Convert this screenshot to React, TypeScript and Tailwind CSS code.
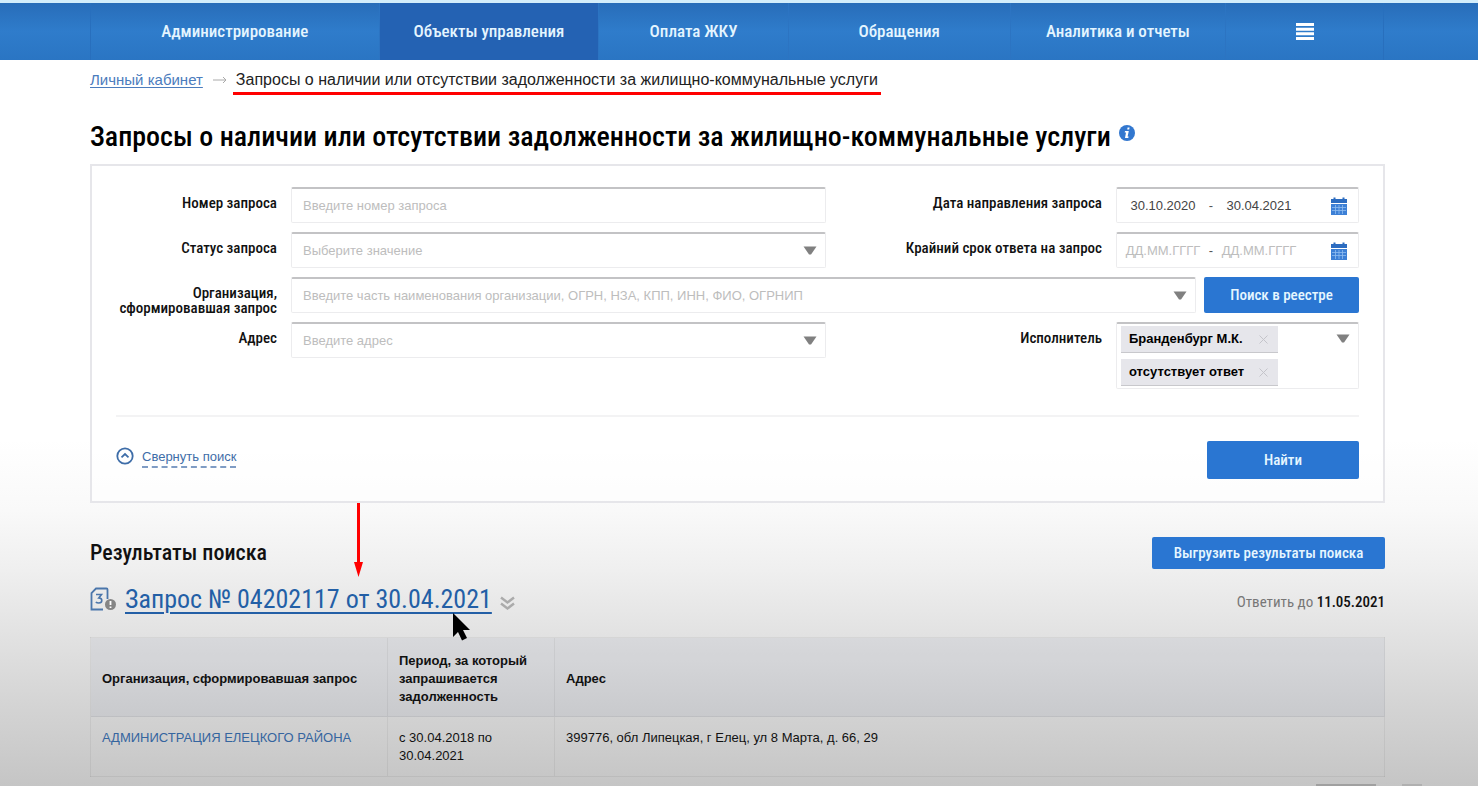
import { ReactNode } from "react";

const tabs = [
  { name: "Администрирование", active: false },
  { name: "Объекты управления", active: true },
  { name: "Оплата ЖКУ", active: false },
  { name: "Обращения", active: false },
  { name: "Аналитика и отчеты", active: false },
];

const executors = ["Бранденбург М.К.", "отсутствует ответ"];

const results = [
  {
    org: "АДМИНИСТРАЦИЯ ЕЛЕЦКОГО РАЙОНА",
    period: "с 30.04.2018 по 30.04.2021",
    address: "399776, обл Липецкая, г Елец, ул 8 Марта, д. 66, 29",
  },
];

const condensed =
  "font-['Roboto_Condensed','Liberation_Sans_Narrow',Roboto,sans-serif]";
const field =
  "h-9 w-full rounded-xs border border-[#ececee] border-t-2 border-t-[#c3c3c5] bg-white";
const text = "text-[13px] text-[#444] placeholder:text-[#bdbdbd] outline-none";
const blueButton = "rounded-xs bg-[#2a76d2] font-medium text-[#e6f6ff]";

const Triangle = () => (
  <svg width="14" height="9" viewBox="0 0 14 9" fill="#808080" aria-hidden="true">
    <path d="M0.5 0.5h13L8 8.5H6z" />
  </svg>
);

const CalendarIcon = () => (
  <svg width="18" height="18" viewBox="0 0 18 18" aria-hidden="true">
    <path d="M1 2h2.5V0.5h2V2h7V0.5h2V2H17v4H1z" fill="#2c6cc0" />
    <path d="M1 7h16v11H1z" fill="#3d80d6" />
    <path
      d="M2 10.5h14M2 13.5h14M5.5 8v9M9 8v9M12.5 8v9"
      stroke="#8fbcf0"
      strokeWidth="0.8"
    />
  </svg>
);

const Label = ({ id, children }: { id: string; children: ReactNode }) => (
  <label
    htmlFor={id}
    className={`${condensed} -mb-1.5 pt-[9px] text-right text-[15px] leading-[15px] font-medium text-[#111]`}
  >
    {children}
  </label>
);

const Combo = ({ id, placeholder }: { id: string; placeholder: string }) => (
  <div className={`${field} flex items-center pr-2 pl-[11px]`}>
    <input
      id={id}
      placeholder={placeholder}
      className={`${text} min-w-0 flex-1`}
    />
    <button type="button" aria-label="Показать список">
      <Triangle />
    </button>
  </div>
);

const DateRange = ({ id, from, to }: { id: string; from?: string; to?: string }) => (
  <div className={`${field} flex items-center justify-between pr-2.5 pl-1.5`}>
    <div className="flex items-center">
      <input
        id={id}
        defaultValue={from}
        placeholder="ДД.ММ.ГГГГ"
        className={`${text} w-[80px] text-center`}
      />
      <span className="w-4 text-center text-[13px] text-[#555]">-</span>
      <input
        aria-label="по"
        defaultValue={to}
        placeholder="ДД.ММ.ГГГГ"
        className={`${text} w-[80px] text-center`}
      />
    </div>
    <button type="button" aria-label="Календарь">
      <CalendarIcon />
    </button>
  </div>
);

const Header = () => (
  <header className="border-t-[3px] border-[#d3edfb] bg-linear-to-b from-[#286db9] via-[#2f7ccb] to-[#2a75c3] pr-[94px] pl-[90px]">
    <nav
      className={`${condensed} grid h-[57px] grid-cols-[289fr_220fr_190fr_222fr_216fr_157fr] border-x border-[#286fbd] text-[17px] font-medium text-[#e4f5ff]`}
    >
      {tabs.map((tab) => (
        <a
          key={tab.name}
          href="#"
          className={`flex items-center justify-center border-r border-[#2c74c2] ${
            tab.active ? "bg-[#2462b3]" : ""
          }`}
        >
          {tab.name}
        </a>
      ))}
      <button className="flex items-center justify-center" aria-label="Меню">
        <svg width="18" height="17" viewBox="0 0 18 17" fill="#fff" aria-hidden="true">
          <path d="M0 0h18v3H0zM0 4.7h18v3H0zM0 9.3h18v3H0zM0 14h18v3H0z" />
        </svg>
      </button>
    </nav>
  </header>
);

const SearchForm = () => (
  <form className="mt-[7px] border-2 border-[#e6e6ea] bg-white/50 px-6 pt-[21px] pb-[22px]">
    <div className="grid grid-cols-[161px_536fr_262fr_243px] gap-x-[14px] gap-y-[9px]">
      <Label id="number">Номер запроса</Label>
      <input
        id="number"
        placeholder="Введите номер запроса"
        className={`${field} ${text} px-[11px]`}
      />
      <Label id="sent">Дата направления запроса</Label>
      <DateRange id="sent" from="30.10.2020" to="30.04.2021" />

      <Label id="status">Статус запроса</Label>
      <div className={`${field} flex items-center pr-2`}>
        <select
          id="status"
          className="min-w-0 flex-1 appearance-none pl-[11px] text-[13px] text-[#bdbdbd] outline-none"
        >
          <option>Выберите значение</option>
        </select>
        <Triangle />
      </div>
      <Label id="deadline">Крайний срок ответа на запрос</Label>
      <DateRange id="deadline" />

      <Label id="org">Организация, сформировавшая запрос</Label>
      <div className="col-span-3 flex gap-2">
        <Combo
          id="org"
          placeholder="Введите часть наименования организации, ОГРН, НЗА, КПП, ИНН, ФИО, ОГРНИП"
        />
        <button
          type="button"
          className={`${condensed} ${blueButton} w-[155px] shrink-0 text-[15px]`}
        >
          Поиск в реестре
        </button>
      </div>

      <Label id="address">Адрес</Label>
      <Combo id="address" placeholder="Введите адрес" />
      <Label id="executor">Исполнитель</Label>
      <div className="flex items-start justify-between rounded-xs border border-t-2 border-[#ececee] border-t-[#c3c3c5] bg-white pt-0.5 pr-2 pb-0.5 pl-1">
        <div className="flex flex-col items-start gap-1.5">
          {executors.map((name) => (
            <span
              key={name}
              className="flex h-[27px] w-[157px] items-center justify-between border-b border-[#c8c8cc] bg-[#e6e6eb] pr-2.5 pl-2 text-[13px] font-bold whitespace-nowrap text-black"
            >
              {name}
              <button type="button" aria-label="Удалить">
                <svg width="9" height="9" viewBox="0 0 9 9" stroke="#c4c4ca" aria-hidden="true">
                  <path d="M0.5 0.5l8 8M8.5 0.5l-8 8" />
                </svg>
              </button>
            </span>
          ))}
        </div>
        <button id="executor" type="button" className="mt-2" aria-label="Показать список">
          <Triangle />
        </button>
      </div>
    </div>

    <div className="mt-[26px] flex items-start justify-between border-t-2 border-[#f3f3f4] pt-6">
      <button type="button" className="mt-1.5 flex items-start gap-2 text-[#3e6da8]">
        <svg width="18" height="18" viewBox="0 0 18 18" fill="none" stroke="currentColor" aria-hidden="true">
          <circle cx="9" cy="9" r="7.7" strokeWidth="1.8" />
          <path d="M5.5 10.3L9 7l3.5 3.3" strokeWidth="1.8" />
        </svg>
        <span className="border-b-2 border-dashed border-[#7f9cc4] text-[13px] leading-[19px]">
          Свернуть поиск
        </span>
      </button>
      <button type="button" className={`${condensed} ${blueButton} h-[38px] w-[152px] text-[15px]`}>
        Найти
      </button>
    </div>
  </form>
);

const Results = () => (
  <section className="relative pt-[34px]">
    <div className="flex items-center justify-between">
      <h2 className={`${condensed} text-[22px] leading-8 font-medium text-[#111]`}>
        Результаты поиска
      </h2>
      <button className={`${condensed} ${blueButton} h-8 w-[233px] text-[15px]`}>
        Выгрузить результаты поиска
      </button>
    </div>

    <div className={`${condensed} mt-2 flex h-[44px] items-center justify-between`}>
      <div className="flex items-center">
        <svg width="27" height="24" viewBox="0 0 27 24" fill="none" aria-hidden="true">
          <path
            d="M13 22.5H1.5V6L6 1.5h10.5q1 0 1 1V12"
            stroke="#4b76ab"
            strokeWidth="1.8"
          />
          <path d="M6 7.5h5.5L8.8 11q3 0 3 2.5t-3 2.5q-2 0-3-1" stroke="#4b76ab" strokeWidth="1.6" />
          <circle cx="20.5" cy="17.5" r="5.5" fill="#858585" />
          <path d="M20.5 14v4M20.5 19.5v1.6" stroke="#fff" strokeWidth="1.8" />
        </svg>
        <a
          href="#"
          className="ml-2 text-[26px] text-[#235fa6] underline decoration-2 underline-offset-4"
        >
          Запрос № 04202117 от 30.04.2021
        </a>
        <svg
          className="mt-2 ml-2"
          width="15"
          height="14"
          viewBox="0 0 15 14"
          fill="none"
          stroke="#ababab"
          strokeWidth="2.4"
          aria-hidden="true"
        >
          <path d="M1 1.5l6.5 5 6.5-5M1 7.5l6.5 5 6.5-5" />
        </svg>
      </div>
      <p className="pt-1.5 text-[15px] text-[#777]">
        Ответить до <span className="font-medium text-[#111]">11.05.2021</span>
      </p>
    </div>

    <table className="mt-4 w-full table-fixed border-collapse border border-black/5 text-left text-[13px] leading-[18px] text-[#111]">
      <colgroup>
        <col className="w-[297px]" />
        <col className="w-[167px]" />
        <col />
      </colgroup>
      <thead className="bg-[#46508c]/6">
        <tr className="h-[79px]">
          <th className="px-[11px] pt-1">Организация, сформировавшая запрос</th>
          <th className="border-x border-black/5 px-[11px] pt-1">
            Период, за который запрашивается задолженность
          </th>
          <th className="px-[11px] pt-1">Адрес</th>
        </tr>
      </thead>
      <tbody>
        {results.map((row) => (
          <tr key={row.org} className="h-[60px] border-t border-black/5 align-top">
            <td className="px-[11px] pt-3">
              <a href="#" className="whitespace-nowrap text-[#35659f]">
                {row.org}
              </a>
            </td>
            <td className="border-x border-black/5 px-[11px] pt-3">{row.period}</td>
            <td className="px-[11px] pt-3">{row.address}</td>
          </tr>
        ))}
      </tbody>
    </table>

    <svg className="absolute top-0 left-[263px]" width="10" height="74" viewBox="0 0 10 74" fill="#f00" aria-hidden="true">
      <path d="M4 0h3v59h3L5.5 74 1 59h3z" />
    </svg>
    <svg className="absolute top-[110px] left-[362px]" width="20" height="30" viewBox="0 0 20 30" aria-hidden="true">
      <path d="M1 0v24l5-5 4 8.5 5-2.5-4-8h7z" fill="#000" />
    </svg>
  </section>
);

const App = () => {
  return (
    <div className="relative min-h-screen bg-[linear-gradient(#fff_440px,#f9f9f9_510px,#efefef_570px,#e5e5e5_620px,#d5d5d5_700px,#c5c5c5_786px)] font-['Liberation_Sans',Arial,sans-serif]">
      <Header />
      <main className="pr-[93px] pl-[90px]">
        <div className="flex items-start pt-2 leading-6">
          <a href="#" className="text-[15px] text-[#4b7cbd] underline underline-offset-2">
            Личный кабинет
          </a>
          <svg className="mt-2 ml-2.5" width="14" height="8" viewBox="0 0 14 8" fill="none" stroke="#aaa" aria-hidden="true">
            <path d="M0 4h13M10 1l3 3-3 3" />
          </svg>
          <span className="ml-1.5 border-b-[3px] border-[#f00] px-[3px] text-[16px] text-[#222]">
            Запросы о наличии или отсутствии задолженности за жилищно-коммунальные услуги
          </span>
        </div>
        <div className="mt-[22px] flex items-start gap-2">
          <h1 className={`${condensed} text-[28px] leading-10 font-medium text-black`}>
            Запросы о наличии или отсутствии задолженности за жилищно-коммунальные услуги
          </h1>
          <svg className="mt-2" width="16" height="16" viewBox="0 0 16 16" aria-hidden="true">
            <circle cx="8" cy="8" r="8" fill="#3277cf" />
            <path d="M8.6 2.5h2l-.4 2h-2zM6 6h3.8l-1.2 5.5h1l-.3 1.5H6l1-5.5H5.7z" fill="#fff" />
          </svg>
        </div>
        <SearchForm />
        <Results />
      </main>
      {/* top edge of the floating widget below the fold */}
      <div className="absolute right-[56px] bottom-0 flex gap-[26px]">
        <span className="h-0.5 w-[60px] bg-[#a0a0a0]" />
        <span className="h-0.5 w-5 bg-[#b0b0b0]" />
      </div>
    </div>
  );
};

export default App;
